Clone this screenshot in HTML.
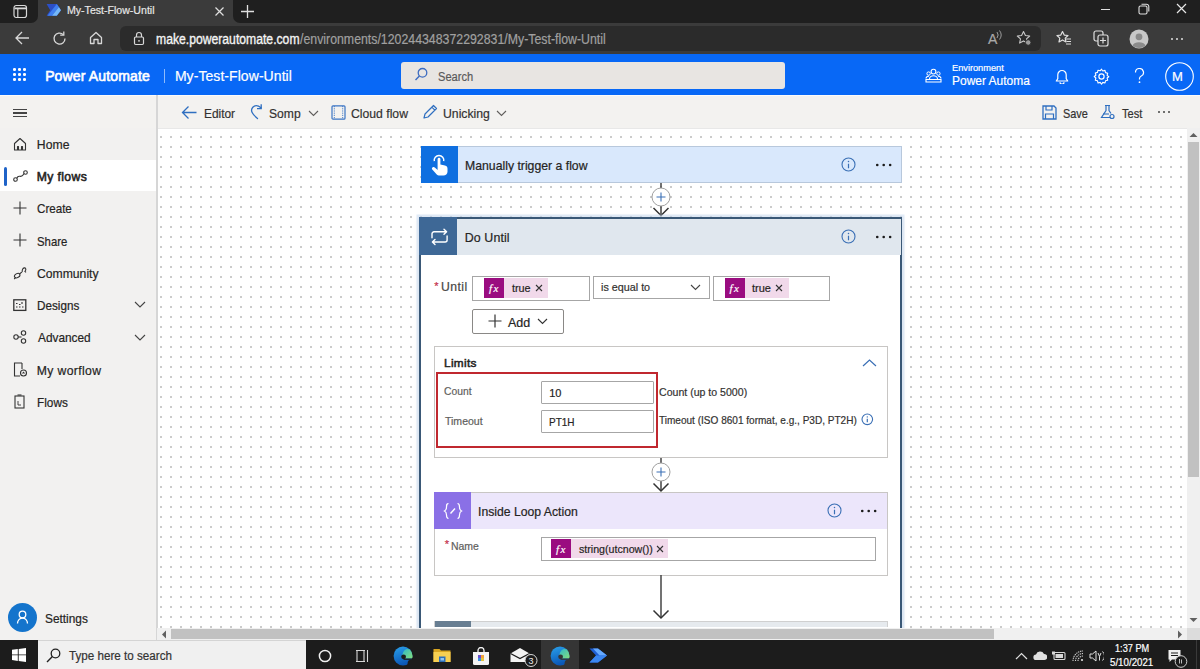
<!DOCTYPE html><html><head><meta charset="utf-8"><style>
html,body{margin:0;padding:0;width:1200px;height:669px;overflow:hidden;background:#fff}
body{position:relative;font-family:"Liberation Sans",sans-serif}
.t{position:absolute;white-space:nowrap;line-height:1}
.b{position:absolute}
.dots{background-image:linear-gradient(90deg,#fff 0,#fff 100%);}
</style></head><body>
<div class="b" style="left:0px;top:0px;width:1200px;height:54px;background:#3b3b3b"></div>
<div class="b" style="left:0px;top:0px;width:38px;height:23px;background:#1f1f1f;border-bottom-right-radius:7px"></div>
<div class="b" style="left:233px;top:0px;width:967px;height:23px;background:#1f1f1f;border-bottom-left-radius:7px"></div>
<svg class="b" style="left:13px;top:4px;" width="15" height="15" viewBox="0 0 15 15"><rect x="1" y="1.5" width="12.5" height="12" rx="2.2" fill="none" stroke="#d8d8d8" stroke-width="1.2"/><path d="M1.5 3.5h11.5v1.8H1.5z" fill="#d8d8d8"/><path d="M4.8 5v8.3" stroke="#d8d8d8" stroke-width="1.2"/></svg>
<svg class="b" style="left:46px;top:3px;" width="16" height="14" viewBox="0 0 16 14"><path d="M0.6 0.9H10.8L15 7.2 10.8 12.8H0.6L4.2 7.2z" fill="#2b4fc8"/><path d="M1.5 12.8L10.8 0.9 12.9 4 6 12.8z" fill="#3f7ff0"/><path d="M6 12.8L12.9 4 15 7.2 10.8 12.8z" fill="#74b8f8"/></svg>
<div class="t" style="left:67.45px;top:5px;font-size:11px;font-weight:400;color:#e6e6e6;letter-spacing:0.000px;-webkit-text-stroke:0.2px #e6e6e6;transform:scaleX(0.9611);transform-origin:0 0;">My-Test-Flow-Until</div>
<svg class="b" style="left:214px;top:6px;" width="11" height="11" viewBox="0 0 11 11"><path d="M1.5 1.5l8 8M9.5 1.5l-8 8" stroke="#e0e0e0" stroke-width="1.2"/></svg>
<svg class="b" style="left:240px;top:4px;" width="15" height="15" viewBox="0 0 15 15"><path d="M7.5 1v13M1 7.5h13" stroke="#e0e0e0" stroke-width="1.3"/></svg>
<div class="b" style="left:1101px;top:9px;width:9px;height:1px;background:#e0e0e0"></div>
<svg class="b" style="left:1138px;top:3px;" width="12" height="12" viewBox="0 0 12 12"><rect x="1" y="3" width="8" height="8" rx="1.5" fill="none" stroke="#e0e0e0" stroke-width="1.1"/><path d="M3.5 1.2h5a2.3 2.3 0 0 1 2.3 2.3v5" fill="none" stroke="#e0e0e0" stroke-width="1.1"/></svg>
<svg class="b" style="left:1176px;top:3px;" width="11" height="11" viewBox="0 0 11 11"><path d="M1 1l9 9M10 1l-9 9" stroke="#e8e8e8" stroke-width="1.2"/></svg>
<div class="b" style="left:120px;top:26px;width:921px;height:25px;background:#2b2b2b;border-radius:6px"></div>
<svg class="b" style="left:14px;top:30px;" width="17" height="16" viewBox="0 0 17 16"><path d="M2 8h13M8 2L2 8l6 6" fill="none" stroke="#d8d8d8" stroke-width="1.3"/></svg>
<svg class="b" style="left:51px;top:30px;" width="17" height="17" viewBox="0 0 17 17"><path d="M14 8.5A5.5 5.5 0 1 1 12.3 4.6" fill="none" stroke="#d8d8d8" stroke-width="1.3"/><path d="M12.8 1.5v3.6H9.2" fill="none" stroke="#d8d8d8" stroke-width="1.3"/></svg>
<svg class="b" style="left:88px;top:30px;" width="16" height="16" viewBox="0 0 16 16"><path d="M2.5 7.5L8 2.5l5.5 5v6h-3.5v-4h-4v4H2.5z" fill="none" stroke="#d8d8d8" stroke-width="1.3" stroke-linejoin="round"/></svg>
<svg class="b" style="left:133px;top:31px;" width="12" height="15" viewBox="0 0 12 15"><rect x="1.5" y="6" width="9" height="7.5" rx="1.2" fill="none" stroke="#d8d8d8" stroke-width="1.2"/><path d="M3.5 6V4a2.5 2.5 0 0 1 5 0v2" fill="none" stroke="#d8d8d8" stroke-width="1.2"/><circle cx="6" cy="9.8" r="0.9" fill="#d8d8d8"/></svg>
<div class="t" style="left:155.91px;top:33px;font-size:13.8px;font-weight:400;color:#f4f4f4;letter-spacing:0.000px;-webkit-text-stroke:0.2px #f4f4f4;-webkit-text-stroke:0.35px #f4f4f4;transform:scaleX(0.8829);transform-origin:0 0;">make.powerautomate.com</div>
<div class="t" style="left:300.00px;top:33px;font-size:13.8px;font-weight:400;color:#a0a0a0;letter-spacing:0.000px;-webkit-text-stroke:0.2px #a0a0a0;transform:scaleX(0.8937);transform-origin:0 0;">/environments/120244348372292831/My-Test-flow-Until</div>
<div class="t" style="left:988.00px;top:32px;font-size:14px;font-weight:400;color:#a8a8a8;letter-spacing:0.000px;-webkit-text-stroke:0.2px #a8a8a8;">A</div>
<svg class="b" style="left:996px;top:30px;" width="8" height="10" viewBox="0 0 8 10"><path d="M1 2a5 5 0 0 1 0 6M3.5 0.5a7.5 7.5 0 0 1 0 9" fill="none" stroke="#a8a8a8" stroke-width="0.9"/></svg>
<svg class="b" style="left:1016px;top:30px;" width="17" height="17" viewBox="0 0 17 17"><path d="M7.5 1.5l1.9 4 4.3.5-3.2 2.9.9 4.2-3.9-2.2-3.9 2.2.9-4.2L1.3 6l4.3-.5z" fill="none" stroke="#c8c8c8" stroke-width="1.1" stroke-linejoin="round"/><circle cx="12.2" cy="12.5" r="2.8" fill="#9a9a9a" stroke="#2b2b2b" stroke-width="1"/></svg>
<svg class="b" style="left:1056px;top:30px;" width="16" height="16" viewBox="0 0 16 16"><path d="M6.5 1.5l1.7 3.6 3.8.4-2.8 2.6.8 3.8-3.5-2-3.5 2 .8-3.8L1 5.5l3.8-.4z" fill="none" stroke="#e0e0e0" stroke-width="1.2" stroke-linejoin="round"/><path d="M10 9h5M10.5 11.5h4.5M10 14h5" stroke="#e0e0e0" stroke-width="1.2"/></svg>
<svg class="b" style="left:1093px;top:30px;" width="16" height="17" viewBox="0 0 16 17"><rect x="1" y="1" width="9" height="10" rx="2" fill="none" stroke="#e0e0e0" stroke-width="1.2"/><rect x="5" y="5" width="10" height="11" rx="2" fill="#3b3b3b" stroke="#e0e0e0" stroke-width="1.2"/><path d="M10 7.5v6M7 10.5h6" stroke="#e0e0e0" stroke-width="1.2"/></svg>
<svg class="b" style="left:1129px;top:29px;" width="20" height="20" viewBox="0 0 20 20"><circle cx="10" cy="10" r="9.5" fill="#c8c8c8"/><circle cx="10" cy="7.8" r="3.4" fill="#8a8a8a"/><path d="M3.5 16.5a7 5 0 0 1 13 0A9.5 9.5 0 0 1 3.5 16.5z" fill="#8a8a8a"/></svg>
<div class="b" style="left:1171px;top:38px;width:2px;height:2px;background:#e0e0e0;border-radius:1px"></div>
<div class="b" style="left:1176px;top:38px;width:2px;height:2px;background:#e0e0e0;border-radius:1px"></div>
<div class="b" style="left:1181px;top:38px;width:2px;height:2px;background:#e0e0e0;border-radius:1px"></div>
<div class="b" style="left:0px;top:54px;width:1200px;height:41px;background:#0868f6"></div>
<div class="b" style="left:13.0px;top:68.0px;width:2.6px;height:2.6px;background:#fff;border-radius:50%"></div>
<div class="b" style="left:13.0px;top:73.2px;width:2.6px;height:2.6px;background:#fff;border-radius:50%"></div>
<div class="b" style="left:13.0px;top:78.4px;width:2.6px;height:2.6px;background:#fff;border-radius:50%"></div>
<div class="b" style="left:18.2px;top:68.0px;width:2.6px;height:2.6px;background:#fff;border-radius:50%"></div>
<div class="b" style="left:18.2px;top:73.2px;width:2.6px;height:2.6px;background:#fff;border-radius:50%"></div>
<div class="b" style="left:18.2px;top:78.4px;width:2.6px;height:2.6px;background:#fff;border-radius:50%"></div>
<div class="b" style="left:23.4px;top:68.0px;width:2.6px;height:2.6px;background:#fff;border-radius:50%"></div>
<div class="b" style="left:23.4px;top:73.2px;width:2.6px;height:2.6px;background:#fff;border-radius:50%"></div>
<div class="b" style="left:23.4px;top:78.4px;width:2.6px;height:2.6px;background:#fff;border-radius:50%"></div>
<div class="t" style="left:45.13px;top:69px;font-size:14px;font-weight:400;color:#ffffff;letter-spacing:0.153px;-webkit-text-stroke:0.63px #ffffff;">Power Automate</div>
<div class="b" style="left:164px;top:69px;width:1px;height:14px;background:rgba(255,255,255,0.55)"></div>
<div class="t" style="left:174.88px;top:69px;font-size:14px;font-weight:400;color:#ffffff;letter-spacing:0.065px;-webkit-text-stroke:0.2px #ffffff;">My-Test-Flow-Until</div>
<div class="b" style="left:401px;top:62px;width:384px;height:27px;background:#e8e5e2;border-radius:3px"></div>
<svg class="b" style="left:414px;top:67px;" width="14" height="15" viewBox="0 0 14 15"><circle cx="8.5" cy="5.8" r="4.3" fill="none" stroke="#3d6cc0" stroke-width="1.3"/><path d="M5.4 8.9L1.5 13" stroke="#3d6cc0" stroke-width="1.4"/></svg>
<div class="t" style="left:438.40px;top:71px;font-size:12.5px;font-weight:400;color:#5a5a5a;letter-spacing:0.000px;-webkit-text-stroke:0.2px #5a5a5a;transform:scaleX(0.8889);transform-origin:0 0;">Search</div>
<svg class="b" style="left:925px;top:68px;" width="17" height="15" viewBox="0 0 17 15"><circle cx="8.5" cy="3.6" r="2.4" fill="none" stroke="#fff" stroke-width="1.1"/><circle cx="3.6" cy="5.6" r="1.7" fill="none" stroke="#fff" stroke-width="1"/><circle cx="13.4" cy="5.6" r="1.7" fill="none" stroke="#fff" stroke-width="1"/><path d="M4.5 11a4 3.2 0 0 1 8 0M1 10.5a2.8 2.5 0 0 1 3-2.3M16 10.5a2.8 2.5 0 0 0-3-2.3M1 11.5h15v2.5H1z" fill="none" stroke="#fff" stroke-width="1.1"/></svg>
<div class="t" style="left:952.26px;top:63px;font-size:9.6px;font-weight:400;color:#ffffff;letter-spacing:0.000px;-webkit-text-stroke:0.2px #ffffff;transform:scaleX(0.9607);transform-origin:0 0;">Environment</div>
<div class="t" style="left:952.04px;top:75px;font-size:12.8px;font-weight:400;color:#ffffff;letter-spacing:0.000px;-webkit-text-stroke:0.2px #ffffff;transform:scaleX(0.9356);transform-origin:0 0;">Power Automa</div>
<svg class="b" style="left:1055px;top:69px;" width="14" height="15" viewBox="0 0 14 15"><path d="M7 1.5a4.2 4.2 0 0 1 4.2 4.2v4l1.5 2.3H1.3l1.5-2.3v-4A4.2 4.2 0 0 1 7 1.5z" fill="none" stroke="#fff" stroke-width="1.2" stroke-linejoin="round"/><path d="M5 13.2a2 2 0 0 0 4 0" fill="none" stroke="#fff" stroke-width="1.2"/></svg>
<svg class="b" style="left:1093px;top:68px;" width="17" height="17" viewBox="0 0 17 17"><circle cx="8.5" cy="8.5" r="2.6" fill="none" stroke="#fff" stroke-width="1.2"/><path d="M8.5 1.2l1.3 1.8 2.2-.6.5 2.2 2.2.6-.6 2.2 1.7 1.3-1.7 1.3.6 2.2-2.2.6-.5 2.2-2.2-.6-1.3 1.8-1.3-1.8-2.2.6-.5-2.2-2.2-.6.6-2.2L1.2 8.5l1.7-1.3-.6-2.2 2.2-.6.5-2.2 2.2.6z" fill="none" stroke="#fff" stroke-width="1.1" stroke-linejoin="round"/></svg>
<svg class="b" style="left:1134px;top:68px;" width="11" height="16" viewBox="0 0 11 16"><path d="M1.5 4.5a4 4 0 1 1 5.5 3.7c-1 .5-1.5 1.2-1.5 2.3v1" fill="none" stroke="#fff" stroke-width="1.2"/><circle cx="5.5" cy="14.2" r="0.9" fill="#fff"/></svg>
<svg class="b" style="left:1165px;top:62px;" width="29" height="29" viewBox="0 0 29 29"><circle cx="14.5" cy="14.5" r="13.8" fill="none" stroke="#fff" stroke-width="1.1"/></svg>
<div class="t" style="left:1171.96px;top:70px;font-size:13px;font-weight:400;color:#ffffff;letter-spacing:0.000px;-webkit-text-stroke:0.2px #ffffff;">M</div>
<div class="b" style="left:0px;top:95px;width:1200px;height:34px;background:#f3f2f0"></div>
<div class="b" style="left:0px;top:95px;width:1200px;height:1px;background:#fbfbfb"></div>
<div class="b" style="left:157px;top:128px;width:1043px;height:1px;background:#e8e8e8"></div>
<div class="b" style="left:13px;top:109.0px;width:13.5px;height:1.4px;background:#444"></div>
<div class="b" style="left:13px;top:112.3px;width:13.5px;height:1.4px;background:#444"></div>
<div class="b" style="left:13px;top:115.6px;width:13.5px;height:1.4px;background:#444"></div>
<svg class="b" style="left:181px;top:105px;" width="17" height="15" viewBox="0 0 17 15"><path d="M1.5 7.5h14M7.5 1.5l-6 6 6 6" fill="none" stroke="#2f6fc0" stroke-width="1.3"/></svg>
<div class="t" style="left:203.95px;top:107px;font-size:13.2px;font-weight:400;color:#323130;letter-spacing:0.000px;-webkit-text-stroke:0.2px #323130;transform:scaleX(0.9019);transform-origin:0 0;">Editor</div>
<svg class="b" style="left:249px;top:103px;" width="14" height="17" viewBox="0 0 14 17"><path d="M8.5 15.5C3.5 11.5 0.8 7.5 3.8 4.2 6 2 9 2.3 12 4.8" fill="none" stroke="#2f6fc0" stroke-width="1.3" stroke-linecap="round"/><path d="M12.2 1.3V5.6H8" fill="none" stroke="#2f6fc0" stroke-width="1.3"/></svg>
<div class="t" style="left:269.05px;top:107px;font-size:13.2px;font-weight:400;color:#323130;letter-spacing:0.000px;-webkit-text-stroke:0.2px #323130;transform:scaleX(0.9181);transform-origin:0 0;">Somp</div>
<svg class="b" style="left:308px;top:110px;" width="11" height="7" viewBox="0 0 11 7"><path d="M1 1l4.5 4.5L10 1" fill="none" stroke="#605e5c" stroke-width="1.1"/></svg>
<svg class="b" style="left:331px;top:105px;" width="15" height="15" viewBox="0 0 15 15"><rect x="1" y="0.8" width="13" height="13.4" rx="1" fill="none" stroke="#3a74c4" stroke-width="1.2"/><path d="M3.3 1v13M11.7 1v13" stroke="#3a74c4" stroke-width="0.9" stroke-dasharray="1.2 1"/></svg>
<div class="t" style="left:351.39px;top:107px;font-size:13.2px;font-weight:400;color:#323130;letter-spacing:0.000px;-webkit-text-stroke:0.2px #323130;transform:scaleX(0.9248);transform-origin:0 0;">Cloud flow</div>
<svg class="b" style="left:422px;top:104px;" width="16" height="16" viewBox="0 0 16 16"><path d="M2 14l1-4 8.5-8.5 3 3L6 13z M9.8 3.2l3 3" fill="none" stroke="#2f6fc0" stroke-width="1.2" stroke-linejoin="round"/></svg>
<div class="t" style="left:442.98px;top:107px;font-size:13.2px;font-weight:400;color:#323130;letter-spacing:0.000px;-webkit-text-stroke:0.2px #323130;transform:scaleX(0.9275);transform-origin:0 0;">Unicking</div>
<svg class="b" style="left:496px;top:110px;" width="11" height="7" viewBox="0 0 11 7"><path d="M1 1l4.5 4.5L10 1" fill="none" stroke="#605e5c" stroke-width="1.1"/></svg>
<svg class="b" style="left:1042px;top:105px;" width="15" height="15" viewBox="0 0 15 15"><path d="M1 1h11l2 2v11H1z" fill="none" stroke="#2f6fc0" stroke-width="1.3"/><path d="M4 1v4h6V1M3.5 14V9h8v5" fill="none" stroke="#2f6fc0" stroke-width="1.2"/></svg>
<div class="t" style="left:1062.51px;top:108px;font-size:12.8px;font-weight:400;color:#323130;letter-spacing:0.000px;-webkit-text-stroke:0.2px #323130;transform:scaleX(0.8542);transform-origin:0 0;">Save</div>
<svg class="b" style="left:1100px;top:104px;" width="15" height="16" viewBox="0 0 15 16"><path d="M5 1.5h5M6 1.5v5L1.5 13.5h9" fill="none" stroke="#2f6fc0" stroke-width="1.2"/><path d="M9 1.5v5l2 3" fill="none" stroke="#2f6fc0" stroke-width="1.2"/><circle cx="12" cy="12.5" r="2" fill="none" stroke="#2f6fc0" stroke-width="1.2"/><path d="M3 10h6" stroke="#2f6fc0" stroke-width="1.1"/></svg>
<div class="t" style="left:1121.78px;top:108px;font-size:12.8px;font-weight:400;color:#323130;letter-spacing:0.000px;-webkit-text-stroke:0.2px #323130;transform:scaleX(0.8633);transform-origin:0 0;">Test</div>
<div class="b" style="left:1158px;top:111px;width:2px;height:2px;background:#444;border-radius:1px"></div>
<div class="b" style="left:1163px;top:111px;width:2px;height:2px;background:#444;border-radius:1px"></div>
<div class="b" style="left:1168px;top:111px;width:2px;height:2px;background:#444;border-radius:1px"></div>
<div class="b" style="left:0px;top:128px;width:156px;height:512px;background:#f2f1f0"></div>
<div class="b" style="left:156px;top:95px;width:2px;height:545px;background:#d6d6d6"></div>
<div class="b" style="left:0px;top:160px;width:156px;height:31px;background:#ffffff"></div>
<div class="b" style="left:4px;top:167px;width:3px;height:19px;background:#1f63c8;border-radius:2px"></div>
<div class="t" style="left:36.72px;top:139px;font-size:12.2px;font-weight:400;color:#252423;letter-spacing:0.117px;-webkit-text-stroke:0.2px #252423;">Home</div>
<div class="t" style="left:36.72px;top:171px;font-size:12.2px;font-weight:400;color:#252423;letter-spacing:0.378px;-webkit-text-stroke:0.55px #252423;">My flows</div>
<div class="t" style="left:37.12px;top:203px;font-size:12.2px;font-weight:400;color:#252423;letter-spacing:0.000px;-webkit-text-stroke:0.2px #252423;transform:scaleX(0.9521);transform-origin:0 0;">Create</div>
<div class="t" style="left:37.19px;top:236px;font-size:12.2px;font-weight:400;color:#252423;letter-spacing:0.000px;-webkit-text-stroke:0.2px #252423;transform:scaleX(0.9309);transform-origin:0 0;">Share</div>
<div class="t" style="left:37.09px;top:268px;font-size:12.2px;font-weight:400;color:#252423;letter-spacing:0.000px;-webkit-text-stroke:0.2px #252423;transform:scaleX(0.9990);transform-origin:0 0;">Community</div>
<div class="t" style="left:36.76px;top:300px;font-size:12.2px;font-weight:400;color:#252423;letter-spacing:0.000px;-webkit-text-stroke:0.2px #252423;transform:scaleX(0.9602);transform-origin:0 0;">Designs</div>
<div class="t" style="left:37.70px;top:332px;font-size:12.2px;font-weight:400;color:#252423;letter-spacing:0.000px;-webkit-text-stroke:0.2px #252423;transform:scaleX(0.9720);transform-origin:0 0;">Advanced</div>
<div class="t" style="left:36.72px;top:365px;font-size:12.2px;font-weight:400;color:#252423;letter-spacing:0.379px;-webkit-text-stroke:0.2px #252423;">My worflow</div>
<div class="t" style="left:36.75px;top:397px;font-size:12.2px;font-weight:400;color:#252423;letter-spacing:0.000px;-webkit-text-stroke:0.2px #252423;transform:scaleX(0.9692);transform-origin:0 0;">Flows</div>
<svg class="b" style="left:13px;top:137px;" width="14" height="14" viewBox="0 0 14 14"><path d="M1.5 6.5L7 1.5l5.5 5V13H9.5V9.5h-1V13h-3V9.5h-1V13H1.5z" fill="none" stroke="#333" stroke-width="1.1" stroke-linejoin="round"/></svg>
<svg class="b" style="left:13px;top:170px;" width="15" height="12" viewBox="0 0 15 12"><circle cx="2.5" cy="9.5" r="1.8" fill="none" stroke="#333" stroke-width="1.1"/><circle cx="12.5" cy="2.5" r="1.8" fill="none" stroke="#333" stroke-width="1.1"/><path d="M3.8 8.2C6 3 8 10 11 3.5" fill="none" stroke="#333" stroke-width="1.1"/></svg>
<svg class="b" style="left:13px;top:201px;" width="14" height="14" viewBox="0 0 14 14"><path d="M7 0.5v13M0.5 7h13" stroke="#333" stroke-width="1.1"/></svg>
<svg class="b" style="left:13px;top:233px;" width="14" height="14" viewBox="0 0 14 14"><path d="M7 0.5v13M0.5 7h13" stroke="#333" stroke-width="1.1"/></svg>
<svg class="b" style="left:13px;top:266px;" width="14" height="14" viewBox="0 0 14 14"><ellipse cx="4.2" cy="9.6" rx="2.9" ry="2" transform="rotate(-30 4.2 9.6)" fill="none" stroke="#333" stroke-width="1.1"/><path d="M1.2 13l1.5-1.6M6.5 8l2.5-2.2" fill="none" stroke="#333" stroke-width="1.1"/><path d="M9.5 5.8c-.8-1.6.2-3.6 1.8-3.9 1.4-.2 1.9 1.3 1.2 2.6l-.6.9 1.1 1" fill="none" stroke="#333" stroke-width="1.1"/></svg>
<svg class="b" style="left:13px;top:299px;" width="14" height="13" viewBox="0 0 14 13"><rect x="0.8" y="0.8" width="12" height="10.6" fill="none" stroke="#333" stroke-width="1.3"/><path d="M3 4.5h1.5M9 3v2M3 8h1.5M6 8h1.5M9 8h1.5M6 5.5h1.5" stroke="#333" stroke-width="1.1"/></svg>
<svg class="b" style="left:13px;top:330px;" width="14" height="14" viewBox="0 0 14 14"><circle cx="3" cy="7" r="2.2" fill="none" stroke="#333" stroke-width="1.1"/><circle cx="10.5" cy="3" r="2.2" fill="none" stroke="#333" stroke-width="1.1"/><circle cx="10.5" cy="11" r="2.2" fill="none" stroke="#333" stroke-width="1.1"/><path d="M5 7h3.5" fill="none" stroke="#333" stroke-width="1.1"/></svg>
<svg class="b" style="left:13px;top:362px;" width="15" height="15" viewBox="0 0 15 15"><path d="M9 1H1.5v13H7" fill="none" stroke="#333" stroke-width="1.1"/><path d="M9 1v6" fill="none" stroke="#333" stroke-width="1.1"/><circle cx="10.5" cy="11" r="3" fill="none" stroke="#333" stroke-width="1.1"/><path d="M9.5 11.5l1-1.2 1 1.2" fill="none" stroke="#333" stroke-width="1.1"/></svg>
<svg class="b" style="left:14px;top:394px;" width="12" height="15" viewBox="0 0 12 15"><rect x="1" y="2" width="9" height="12" fill="none" stroke="#333" stroke-width="1.1"/><path d="M3.5 1h4" fill="none" stroke="#333" stroke-width="1.1"/><path d="M4 7v4h3" stroke="#333" stroke-width="0.9" fill="none"/></svg>
<svg class="b" style="left:134px;top:301px;" width="12" height="7" viewBox="0 0 12 7"><path d="M1 1l5 5 5-5" fill="none" stroke="#444" stroke-width="1.1"/></svg>
<svg class="b" style="left:134px;top:334px;" width="12" height="7" viewBox="0 0 12 7"><path d="M1 1l5 5 5-5" fill="none" stroke="#444" stroke-width="1.1"/></svg>
<svg class="b" style="left:8px;top:603px;" width="29" height="29" viewBox="0 0 29 29"><circle cx="14.5" cy="14.5" r="14.5" fill="#1474cc"/><circle cx="14.5" cy="11.5" r="3.3" fill="none" stroke="#fff" stroke-width="1.3"/><path d="M9.5 20.5a5 5.5 0 0 1 10 0" fill="none" stroke="#fff" stroke-width="1.3"/></svg>
<div class="t" style="left:45.17px;top:613px;font-size:12.2px;font-weight:400;color:#252423;letter-spacing:0.000px;-webkit-text-stroke:0.2px #252423;transform:scaleX(0.9739);transform-origin:0 0;">Settings</div>
<div class="b" style="left:158px;top:129px;width:1029px;height:499px;background-color:#fff;background-image:linear-gradient(#fff,#fff),linear-gradient(#fff,#fff);"></div>
<svg class="b" style="left:158px;top:129px" width="1029" height="499"><defs><pattern id="dp" x="2" y="7" width="10" height="10" patternUnits="userSpaceOnUse"><rect x="0" y="0" width="2" height="2" fill="#cbcbcb"/></pattern></defs><rect width="1029" height="499" fill="url(#dp)"/></svg>
<div class="b" style="left:421px;top:146px;width:481px;height:37px;background:#d9e8fc;box-sizing:border-box;border:1px solid #b8c8dc"></div>
<div class="b" style="left:421px;top:146px;width:36.5px;height:37px;background:#0f6fe0"></div>
<svg class="b" style="left:430px;top:152px;" width="20" height="26" viewBox="0 0 20 26"><path d="M4.3 9.2A4.8 4.8 0 1 1 13.7 9.2" fill="none" stroke="#fff" stroke-width="1.4"/><path d="M7.6 7.2a1.4 1.4 0 0 1 2.8 0V12.5l4.6 1.1c1.6.4 2.5 1.5 2.5 3.1v3c0 2.2-1.8 3.9-4 3.9H9.8c-1.4 0-2.6-.6-3.5-1.6L2.3 17.6c-.6-.7-.5-1.7.2-2.2.7-.5 1.7-.4 2.3.2L7.6 18z" fill="#fff"/></svg>
<div class="t" style="left:464.82px;top:160px;font-size:12.4px;font-weight:400;color:#252423;letter-spacing:0.000px;-webkit-text-stroke:0.2px #252423;transform:scaleX(0.9884);transform-origin:0 0;">Manually trigger a flow</div>
<svg class="b" style="left:840.5px;top:157.2px;" width="15.0" height="15.0" viewBox="0 0 15.0 15.0"><circle cx="7.5" cy="7.5" r="6.5" fill="none" stroke="#3a6fb5" stroke-width="1.1"/><path d="M7.5 6.72V11.27" stroke="#3a6fb5" stroke-width="1.2"/><circle cx="7.5" cy="4.57" r="0.78" fill="#3a6fb5"/></svg>
<svg class="b" style="left:874.6px;top:161.7px;" width="18" height="6" viewBox="0 0 18 6"><circle cx="2.25" cy="3" r="1.3" fill="#1b1b1b"/><circle cx="8.70" cy="3" r="1.3" fill="#1b1b1b"/><circle cx="15.15" cy="3" r="1.3" fill="#1b1b1b"/></svg>
<svg class="b" style="left:651.3px;top:183px;" width="20" height="34.5" viewBox="0 0 20 34.5"><path d="M10 0V5M10 23V32.5" stroke="#444" stroke-width="1.5"/><circle cx="10" cy="14" r="9" fill="#fff" stroke="#a0a0a0" stroke-width="1"/><path d="M10 9.5v9M5.5 14h9" stroke="#3a6fb5" stroke-width="1.1"/><path d="M2.5 25.0L10 32.5l7.5-7.5" fill="none" stroke="#333" stroke-width="1.5"/></svg>
<div class="b" style="left:419.2px;top:217px;width:482.8px;height:430px;background:#fff;box-sizing:border-box;border:2px solid #3a5876;box-shadow:0 0 0 2.5px rgba(200,218,240,0.55),0 1px 5px rgba(0,0,0,0.10)"></div>
<div class="b" style="left:421.5px;top:219px;width:479px;height:36px;background:#e0e7ee"></div>
<div class="b" style="left:419.2px;top:217px;width:38.3px;height:38px;background:#3e6896"></div>
<svg class="b" style="left:429px;top:228px;" width="21" height="18" viewBox="0 0 21 18"><path d="M3 9.8V5.8a2 2 0 0 1 2-2h12.3M15 1.3l2.6 2.5L15 6.3M18.1 8v4a2 2 0 0 1-2 2H3.6M6 11.5l-2.6 2.5L6 16.5" fill="none" stroke="#fff" stroke-width="1.4" stroke-linejoin="round" stroke-linecap="round"/></svg>
<div class="t" style="left:464.81px;top:232px;font-size:12.4px;font-weight:400;color:#252423;letter-spacing:0.093px;-webkit-text-stroke:0.2px #252423;">Do Until</div>
<svg class="b" style="left:840.5px;top:229.3px;" width="15.0" height="15.0" viewBox="0 0 15.0 15.0"><circle cx="7.5" cy="7.5" r="6.5" fill="none" stroke="#3a6fb5" stroke-width="1.1"/><path d="M7.5 6.72V11.27" stroke="#3a6fb5" stroke-width="1.2"/><circle cx="7.5" cy="4.57" r="0.78" fill="#3a6fb5"/></svg>
<svg class="b" style="left:874.6px;top:233.8px;" width="18" height="6" viewBox="0 0 18 6"><circle cx="2.25" cy="3" r="1.3" fill="#1b1b1b"/><circle cx="8.70" cy="3" r="1.3" fill="#1b1b1b"/><circle cx="15.15" cy="3" r="1.3" fill="#1b1b1b"/></svg>
<div class="t" style="left:434.33px;top:281px;font-size:11px;font-weight:400;color:#c4314b;letter-spacing:0.000px;-webkit-text-stroke:0.2px #c4314b;">*</div>
<div class="t" style="left:441.08px;top:281px;font-size:12.2px;font-weight:400;color:#484644;letter-spacing:0.412px;-webkit-text-stroke:0.2px #484644;">Until</div>
<div class="b" style="left:472px;top:275.5px;width:117.5px;height:25px;box-sizing:border-box;border:1px solid #a6a6a6;background:#fff"></div>
<div class="b" style="left:484px;top:278px;width:64px;height:19.5px;background:#f1d9ea"></div>
<div class="b" style="left:484px;top:278px;width:20px;height:19.5px;background:#9a0c80"></div>
<div class="t" style="left:488.89px;top:283px;font-size:11px;font-weight:400;color:#ffffff;letter-spacing:1.640px;-webkit-text-stroke:0.2px #ffffff;font-family:'Liberation Serif';font-style:italic">fx</div>
<div class="t" style="left:511.84px;top:283px;font-size:11.5px;font-weight:400;color:#252423;letter-spacing:0.000px;-webkit-text-stroke:0.2px #252423;transform:scaleX(0.9401);transform-origin:0 0;">true</div>
<svg class="b" style="left:535px;top:284px;" width="8" height="8" viewBox="0 0 8 8"><path d="M1 1l6 6M7 1L1 7" stroke="#333" stroke-width="1.1"/></svg>
<div class="b" style="left:592.5px;top:275.5px;width:117px;height:23.5px;box-sizing:border-box;border:1px solid #a6a6a6;background:#fff"></div>
<div class="t" style="left:601.30px;top:282px;font-size:11.5px;font-weight:400;color:#323130;letter-spacing:0.000px;-webkit-text-stroke:0.2px #323130;transform:scaleX(0.9369);transform-origin:0 0;">is equal to</div>
<svg class="b" style="left:690px;top:284px;" width="11" height="7" viewBox="0 0 11 7"><path d="M1 1l4.5 4.5L10 1" fill="none" stroke="#444" stroke-width="1.1"/></svg>
<div class="b" style="left:713px;top:275.5px;width:117px;height:25px;box-sizing:border-box;border:1px solid #a6a6a6;background:#fff"></div>
<div class="b" style="left:724.5px;top:278px;width:64px;height:19.5px;background:#f1d9ea"></div>
<div class="b" style="left:724.5px;top:278px;width:20px;height:19.5px;background:#9a0c80"></div>
<div class="t" style="left:729.39px;top:283px;font-size:11px;font-weight:400;color:#ffffff;letter-spacing:1.640px;-webkit-text-stroke:0.2px #ffffff;font-family:'Liberation Serif';font-style:italic">fx</div>
<div class="t" style="left:751.84px;top:283px;font-size:11.5px;font-weight:400;color:#252423;letter-spacing:0.000px;-webkit-text-stroke:0.2px #252423;transform:scaleX(0.9557);transform-origin:0 0;">true</div>
<svg class="b" style="left:775px;top:284px;" width="8" height="8" viewBox="0 0 8 8"><path d="M1 1l6 6M7 1L1 7" stroke="#333" stroke-width="1.1"/></svg>
<div class="b" style="left:472px;top:308.5px;width:91.5px;height:25.5px;box-sizing:border-box;border:1px solid #8a8886;background:#fff;border-radius:2px"></div>
<svg class="b" style="left:488px;top:314px;" width="14" height="14" viewBox="0 0 14 14"><path d="M7 0.5v13M0.5 7h13" stroke="#333" stroke-width="1.2"/></svg>
<div class="t" style="left:508.00px;top:317px;font-size:12.8px;font-weight:400;color:#252423;letter-spacing:0.000px;-webkit-text-stroke:0.2px #252423;transform:scaleX(0.9766);transform-origin:0 0;">Add</div>
<svg class="b" style="left:537px;top:318px;" width="11" height="7" viewBox="0 0 11 7"><path d="M1 1l4.5 4.5L10 1" fill="none" stroke="#333" stroke-width="1.1"/></svg>
<div class="b" style="left:434px;top:345.8px;width:454px;height:112px;box-sizing:border-box;border:1px solid #c8c6c4;background:#fff"></div>
<div class="t" style="left:444.06px;top:358px;font-size:11.8px;font-weight:400;color:#252423;letter-spacing:0.312px;-webkit-text-stroke:0.53px #252423;">Limits</div>
<svg class="b" style="left:862px;top:359px;" width="15" height="8" viewBox="0 0 15 8"><path d="M1 7l6.5-6 6.5 6" fill="none" stroke="#3a6fb5" stroke-width="1.2"/></svg>
<div class="b" style="left:435.5px;top:371.5px;width:222.5px;height:76px;box-sizing:border-box;border:2px solid #c0282f"></div>
<div class="t" style="left:444.48px;top:386px;font-size:11px;font-weight:400;color:#605e5c;letter-spacing:0.000px;-webkit-text-stroke:0.2px #605e5c;transform:scaleX(0.9386);transform-origin:0 0;">Count</div>
<div class="t" style="left:444.79px;top:416px;font-size:11px;font-weight:400;color:#605e5c;letter-spacing:0.000px;-webkit-text-stroke:0.2px #605e5c;transform:scaleX(0.9564);transform-origin:0 0;">Timeout</div>
<div class="b" style="left:540.5px;top:381px;width:113.5px;height:22.7px;box-sizing:border-box;border:1px solid #a6a6a6;background:#fff;border-radius:1px"></div>
<div class="b" style="left:540.5px;top:410.4px;width:113.5px;height:23px;box-sizing:border-box;border:1px solid #a6a6a6;background:#fff;border-radius:1px"></div>
<div class="t" style="left:549.17px;top:388px;font-size:11px;font-weight:400;color:#252423;letter-spacing:0.000px;-webkit-text-stroke:0.2px #252423;">10</div>
<div class="t" style="left:549.20px;top:417px;font-size:11px;font-weight:400;color:#252423;letter-spacing:0.000px;-webkit-text-stroke:0.2px #252423;transform:scaleX(0.9091);transform-origin:0 0;">PT1H</div>
<div class="t" style="left:658.87px;top:387px;font-size:11px;font-weight:400;color:#323130;letter-spacing:0.000px;-webkit-text-stroke:0.2px #323130;transform:scaleX(0.9610);transform-origin:0 0;">Count (up to 5000)</div>
<div class="t" style="left:659.20px;top:415px;font-size:11px;font-weight:400;color:#323130;letter-spacing:0.000px;-webkit-text-stroke:0.2px #323130;transform:scaleX(0.9130);transform-origin:0 0;">Timeout (ISO 8601 format, e.g., P3D, PT2H)</div>
<svg class="b" style="left:861.0px;top:413.3px;" width="12.6" height="12.6" viewBox="0 0 12.6 12.6"><circle cx="6.3" cy="6.3" r="5.3" fill="none" stroke="#3a6fb5" stroke-width="1.1"/><path d="M6.3 5.66V9.37" stroke="#3a6fb5" stroke-width="1.2"/><circle cx="6.3" cy="3.92" r="0.70" fill="#3a6fb5"/></svg>
<svg class="b" style="left:651.3px;top:458px;" width="20" height="35" viewBox="0 0 20 35"><path d="M10 0V5M10 23V33" stroke="#444" stroke-width="1.5"/><circle cx="10" cy="14" r="9" fill="#fff" stroke="#a0a0a0" stroke-width="1"/><path d="M10 9.5v9M5.5 14h9" stroke="#3a6fb5" stroke-width="1.1"/><path d="M2.5 25.5L10 33l7.5-7.5" fill="none" stroke="#333" stroke-width="1.5"/></svg>
<div class="b" style="left:434.4px;top:492.4px;width:454px;height:83.2px;box-sizing:border-box;border:1px solid #c8c6c4;background:#fff"></div>
<div class="b" style="left:435.4px;top:493.4px;width:452px;height:35.6px;background:#ece6fb"></div>
<div class="b" style="left:434.4px;top:492.4px;width:36.6px;height:36.6px;background:#8a70e6"></div>
<svg class="b" style="left:443px;top:502px;" width="20" height="18" viewBox="0 0 20 18"><path d="M5.5 1.5C3.5 1.5 3.5 3 3.5 5s0 3-2 4c2 1 2 2 2 4s0 3.5 2 3.5M14.5 1.5c2 0 2 1.5 2 3.5s0 3 2 4c-2 1-2 2-2 4s0 3.5-2 3.5" fill="none" stroke="#fff" stroke-width="1.2"/><path d="M7.5 11.5l4.5-5" stroke="#fff" stroke-width="1.4"/></svg>
<div class="t" style="left:478.30px;top:506px;font-size:12.4px;font-weight:400;color:#252423;letter-spacing:0.000px;-webkit-text-stroke:0.2px #252423;transform:scaleX(0.9854);transform-origin:0 0;">Inside Loop Action</div>
<svg class="b" style="left:826.8px;top:503.1px;" width="15.0" height="15.0" viewBox="0 0 15.0 15.0"><circle cx="7.5" cy="7.5" r="6.5" fill="none" stroke="#3a6fb5" stroke-width="1.1"/><path d="M7.5 6.72V11.27" stroke="#3a6fb5" stroke-width="1.2"/><circle cx="7.5" cy="4.57" r="0.78" fill="#3a6fb5"/></svg>
<svg class="b" style="left:860.3px;top:507.6px;" width="18" height="6" viewBox="0 0 18 6"><circle cx="2.25" cy="3" r="1.3" fill="#1b1b1b"/><circle cx="8.70" cy="3" r="1.3" fill="#1b1b1b"/><circle cx="15.15" cy="3" r="1.3" fill="#1b1b1b"/></svg>
<div class="t" style="left:444.83px;top:539px;font-size:11px;font-weight:400;color:#c4314b;letter-spacing:0.000px;-webkit-text-stroke:0.2px #c4314b;">*</div>
<div class="t" style="left:451.16px;top:541px;font-size:11px;font-weight:400;color:#605e5c;letter-spacing:0.000px;-webkit-text-stroke:0.2px #605e5c;transform:scaleX(0.9502);transform-origin:0 0;">Name</div>
<div class="b" style="left:540.5px;top:536.6px;width:335.7px;height:24.6px;box-sizing:border-box;border:1px solid #a6a6a6;background:#fff"></div>
<div class="b" style="left:551px;top:538.6px;width:117px;height:19.5px;background:#f1d9ea"></div>
<div class="b" style="left:551px;top:538.6px;width:20px;height:19.5px;background:#9a0c80"></div>
<div class="t" style="left:555.89px;top:544px;font-size:11px;font-weight:400;color:#ffffff;letter-spacing:1.640px;-webkit-text-stroke:0.2px #ffffff;font-family:'Liberation Serif';font-style:italic">fx</div>
<div class="t" style="left:578.73px;top:544px;font-size:11.5px;font-weight:400;color:#252423;letter-spacing:0.000px;-webkit-text-stroke:0.2px #252423;transform:scaleX(0.9247);transform-origin:0 0;">string(utcnow())</div>
<svg class="b" style="left:656px;top:545px;" width="8" height="8" viewBox="0 0 8 8"><path d="M1 1l6 6M7 1L1 7" stroke="#333" stroke-width="1.1"/></svg>
<svg class="b" style="left:651.3px;top:575px;" width="20" height="45" viewBox="0 0 20 45"><path d="M10 0V43" stroke="#444" stroke-width="1.5"/><path d="M2.5 35.5L10 43l7.5-7.5" fill="none" stroke="#333" stroke-width="1.5"/></svg>
<div class="b" style="left:434.4px;top:620.7px;width:454px;height:6.3px;background:#e6eaee;box-sizing:border-box;border:1px solid #d0d0d0;border-bottom:none"></div>
<div class="b" style="left:434.8px;top:621px;width:36.2px;height:6px;background:#687e92"></div>
<div class="b" style="left:1187px;top:128px;width:13px;height:512px;background:#f0f0f0"></div>
<div class="b" style="left:1188px;top:142px;width:11px;height:335px;background:#c1c1c1"></div>
<svg class="b" style="left:1189px;top:132px;" width="9" height="6" viewBox="0 0 9 6"><path d="M0.5 5L4.5 1l4 4z" fill="#606060"/></svg>
<svg class="b" style="left:1189px;top:617px;" width="9" height="6" viewBox="0 0 9 6"><path d="M0.5 1L4.5 5l4-4z" fill="#606060"/></svg>
<div class="b" style="left:157px;top:628px;width:1043px;height:12px;background:#f0f0f0"></div>
<div class="b" style="left:171px;top:629px;width:823px;height:10px;background:#c1c1c1"></div>
<svg class="b" style="left:161px;top:630px;" width="6" height="9" viewBox="0 0 6 9"><path d="M5 0.5L1 4.5l4 4z" fill="#606060"/></svg>
<svg class="b" style="left:1177px;top:630px;" width="6" height="9" viewBox="0 0 6 9"><path d="M1 0.5l4 4-4 4z" fill="#606060"/></svg>
<div class="b" style="left:1187px;top:628px;width:13px;height:12px;background:#dcdcdc"></div>
<div class="b" style="left:0px;top:640px;width:1200px;height:29px;background:#1c1c1c"></div>
<div class="b" style="left:38px;top:640px;width:268px;height:29px;background:#f0f0f0;border-top:1px solid #d4d4d4;box-sizing:border-box"></div>
<svg class="b" style="left:12px;top:648px;" width="14" height="14" viewBox="0 0 14 14"><path d="M0 1.8L5.8 1v5.5H0zM6.7 0.9L14 0v6.5H6.7zM0 7.3h5.8v5.6L0 12.1zM6.7 7.3H14V14l-7.3-1z" fill="#fff"/></svg>
<svg class="b" style="left:46px;top:648px;" width="15" height="15" viewBox="0 0 15 15"><circle cx="9.5" cy="5.5" r="4.3" fill="none" stroke="#222" stroke-width="1.3"/><path d="M6.4 8.6L1 14" stroke="#222" stroke-width="1.4"/></svg>
<div class="t" style="left:68.77px;top:650px;font-size:12.5px;font-weight:400;color:#333333;letter-spacing:0.000px;-webkit-text-stroke:0.2px #333333;transform:scaleX(0.9320);transform-origin:0 0;">Type here to search</div>
<svg class="b" style="left:317px;top:648px;" width="16" height="16" viewBox="0 0 16 16"><circle cx="8" cy="8" r="5.6" fill="none" stroke="#f0f0f0" stroke-width="1.5"/></svg>
<svg class="b" style="left:354px;top:649px;" width="16" height="14" viewBox="0 0 16 14"><path d="M2 1.5h9M2 12.5h9M3 1.5v11M10 1.5v11M13.5 1v12" fill="none" stroke="#d8d8d8" stroke-width="1.1"/></svg>
<svg class="b" style="left:392.7px;top:646px;" width="20" height="20" viewBox="0 0 20 20"><defs><linearGradient id="eg1" x1="0" y1="0" x2="0.3" y2="1"><stop offset="0" stop-color="#2aa0ea"/><stop offset="1" stop-color="#0b58b8"/></linearGradient><linearGradient id="eg1g" x1="0" y1="0" x2="1" y2="1"><stop offset="0" stop-color="#2fb8c8"/><stop offset="1" stop-color="#86e07c"/></linearGradient></defs><circle cx="10" cy="10" r="9.4" fill="url(#eg1)"/><path d="M9.5 9.2C9.5 4.5 13.5 1.6 16.8 3.5A9.4 9.4 0 0 1 19.4 11.8L18.8 12.6H13.5C11.2 12.6 9.5 11.3 9.5 9.2z" fill="url(#eg1g)"/><circle cx="10.6" cy="10.8" r="2.4" fill="#1c1c1c"/><path d="M10.6 13.2H19.6" stroke="#1c1c1c" stroke-width="1.3"/><ellipse cx="18.2" cy="17.2" rx="3.6" ry="3.4" fill="#1c1c1c"/></svg>
<svg class="b" style="left:433px;top:648px;" width="18" height="15" viewBox="0 0 18 15"><path d="M0.5 1h6l1.5 1.5h9.5V14H0.5z" fill="#d9a521"/><path d="M0.5 4h17v10H0.5z" fill="#f7cf52"/><rect x="6" y="8.5" width="6.5" height="5.5" fill="#2f6fb8"/><rect x="7.5" y="10" width="3.5" height="2.5" fill="#8ec3f0"/></svg>
<svg class="b" style="left:472px;top:647px;" width="18" height="18" viewBox="0 0 18 18"><path d="M6 5V3.5a3 3 0 0 1 6 0V5" fill="none" stroke="#f0f0f0" stroke-width="1.3"/><path d="M1 5h16v11.5a1.5 1.5 0 0 1-1.5 1.5h-13A1.5 1.5 0 0 1 1 16.5z" fill="#f4f4f4"/><rect x="6" y="8" width="3" height="3" fill="#6b4fd0"/><rect x="9" y="8" width="3" height="3" fill="#f2a33a"/><rect x="6" y="11" width="3" height="3" fill="#3a8fe0"/><rect x="9" y="11" width="3" height="3" fill="#e6c33a"/></svg>
<svg class="b" style="left:510px;top:647px;" width="28" height="21" viewBox="0 0 28 21"><path d="M0.5 6.5L10 1l9.5 5.5V15H0.5z" fill="#f4f4f4"/><path d="M0.5 6.5L10 11.5l9.5-5" fill="none" stroke="#1c1c1c" stroke-width="1.3"/><circle cx="21" cy="13.5" r="6" fill="#1c1c1c" stroke="#d8d8d8" stroke-width="1"/><text x="21" y="17" font-size="9" fill="#f0f0f0" text-anchor="middle" font-family="Liberation Sans">3</text></svg>
<div class="b" style="left:541px;top:640px;width:38px;height:29px;background:#353535"></div>
<svg class="b" style="left:549.6px;top:645.7px;" width="20" height="20" viewBox="0 0 20 20"><defs><linearGradient id="eg2" x1="0" y1="0" x2="0.3" y2="1"><stop offset="0" stop-color="#2aa0ea"/><stop offset="1" stop-color="#0b58b8"/></linearGradient><linearGradient id="eg2g" x1="0" y1="0" x2="1" y2="1"><stop offset="0" stop-color="#2fb8c8"/><stop offset="1" stop-color="#86e07c"/></linearGradient></defs><circle cx="10" cy="10" r="9.4" fill="url(#eg2)"/><path d="M9.5 9.2C9.5 4.5 13.5 1.6 16.8 3.5A9.4 9.4 0 0 1 19.4 11.8L18.8 12.6H13.5C11.2 12.6 9.5 11.3 9.5 9.2z" fill="url(#eg2g)"/><circle cx="10.6" cy="10.8" r="2.4" fill="#353535"/><path d="M10.6 13.2H19.6" stroke="#353535" stroke-width="1.3"/><ellipse cx="18.2" cy="17.2" rx="3.6" ry="3.4" fill="#353535"/></svg>
<svg class="b" style="left:589px;top:648px;" width="19" height="15" viewBox="0 0 19 15"><path d="M0.5 0.5h8.5l9 7-9 7H0.5l6.5-7z" fill="#1f5fd6"/><path d="M9 0.5l9 7H10.5L4 0.5z" fill="#66aaff"/><path d="M7 7.5h11l-9 7H0.5z" fill="#3a86f0"/></svg>
<svg class="b" style="left:1015px;top:652px;" width="13" height="8" viewBox="0 0 13 8"><path d="M1 7l5.5-5.5L12 7" fill="none" stroke="#e0e0e0" stroke-width="1.2"/></svg>
<svg class="b" style="left:1033px;top:651px;" width="14" height="10" viewBox="0 0 14 10"><path d="M3.2 9a2.7 2.7 0 0 1-.2-5.4A4.3 4.3 0 0 1 11 3a3 3 0 0 1 .5 6z" fill="#e0e0e0"/></svg>
<svg class="b" style="left:1051px;top:650px;" width="15" height="11" viewBox="0 0 15 11"><rect x="3" y="2.5" width="11" height="7" rx="1" fill="none" stroke="#d8d8d8" stroke-width="1.1"/><rect x="4.5" y="4" width="7.5" height="4" fill="#d8d8d8"/><path d="M1 1.5h3v3H1z" fill="#d8d8d8"/></svg>
<svg class="b" style="left:1072px;top:650px;" width="12" height="12" viewBox="0 0 12 12"><path d="M1 11a10 10 0 0 1 10-10M3.5 11a7.5 7.5 0 0 1 7.5-7.5M6 11a5 5 0 0 1 5-5" fill="none" stroke="#d0d0d0" stroke-width="1.1" stroke-dasharray="1.3 0.8"/><circle cx="10" cy="10" r="1.1" fill="#e0e0e0"/></svg>
<svg class="b" style="left:1089px;top:650px;" width="15" height="12" viewBox="0 0 15 12"><path d="M1 4h2.5L7 1v10L3.5 8H1z" fill="none" stroke="#e0e0e0" stroke-width="1"/><path d="M9 3l1.5 3.5v4M12 3l-1.5 3.5M13.5 1.5a6 6 0 0 1 0 9" fill="none" stroke="#e0e0e0" stroke-width="1"/></svg>
<div class="t" style="left:1115.11px;top:644px;font-size:10.2px;font-weight:400;color:#ffffff;letter-spacing:0.000px;-webkit-text-stroke:0.2px #ffffff;transform:scaleX(0.9008);transform-origin:0 0;">1:37 PM</div>
<div class="t" style="left:1110.41px;top:658px;font-size:10.2px;font-weight:400;color:#ffffff;letter-spacing:0.000px;-webkit-text-stroke:0.2px #ffffff;transform:scaleX(0.9546);transform-origin:0 0;">5/10/2021</div>
<svg class="b" style="left:1167px;top:649px;" width="21" height="19" viewBox="0 0 21 19"><path d="M1.5 1h12v9.5H5l-2.5 2.5V10.5h-1z" fill="#f0f0f0"/><path d="M4 4h7M4 6.5h7" stroke="#1c1c1c" stroke-width="1"/><circle cx="14" cy="12.5" r="5.8" fill="#1c1c1c" stroke="#cfcfcf" stroke-width="1"/><path d="M12.5 10v4.5M14.5 10.5v4" stroke="#cfcfcf" stroke-width="0.9"/></svg>
<div class="b" style="left:1196px;top:640px;width:1px;height:29px;background:#3a3a3a"></div>
</body></html>
